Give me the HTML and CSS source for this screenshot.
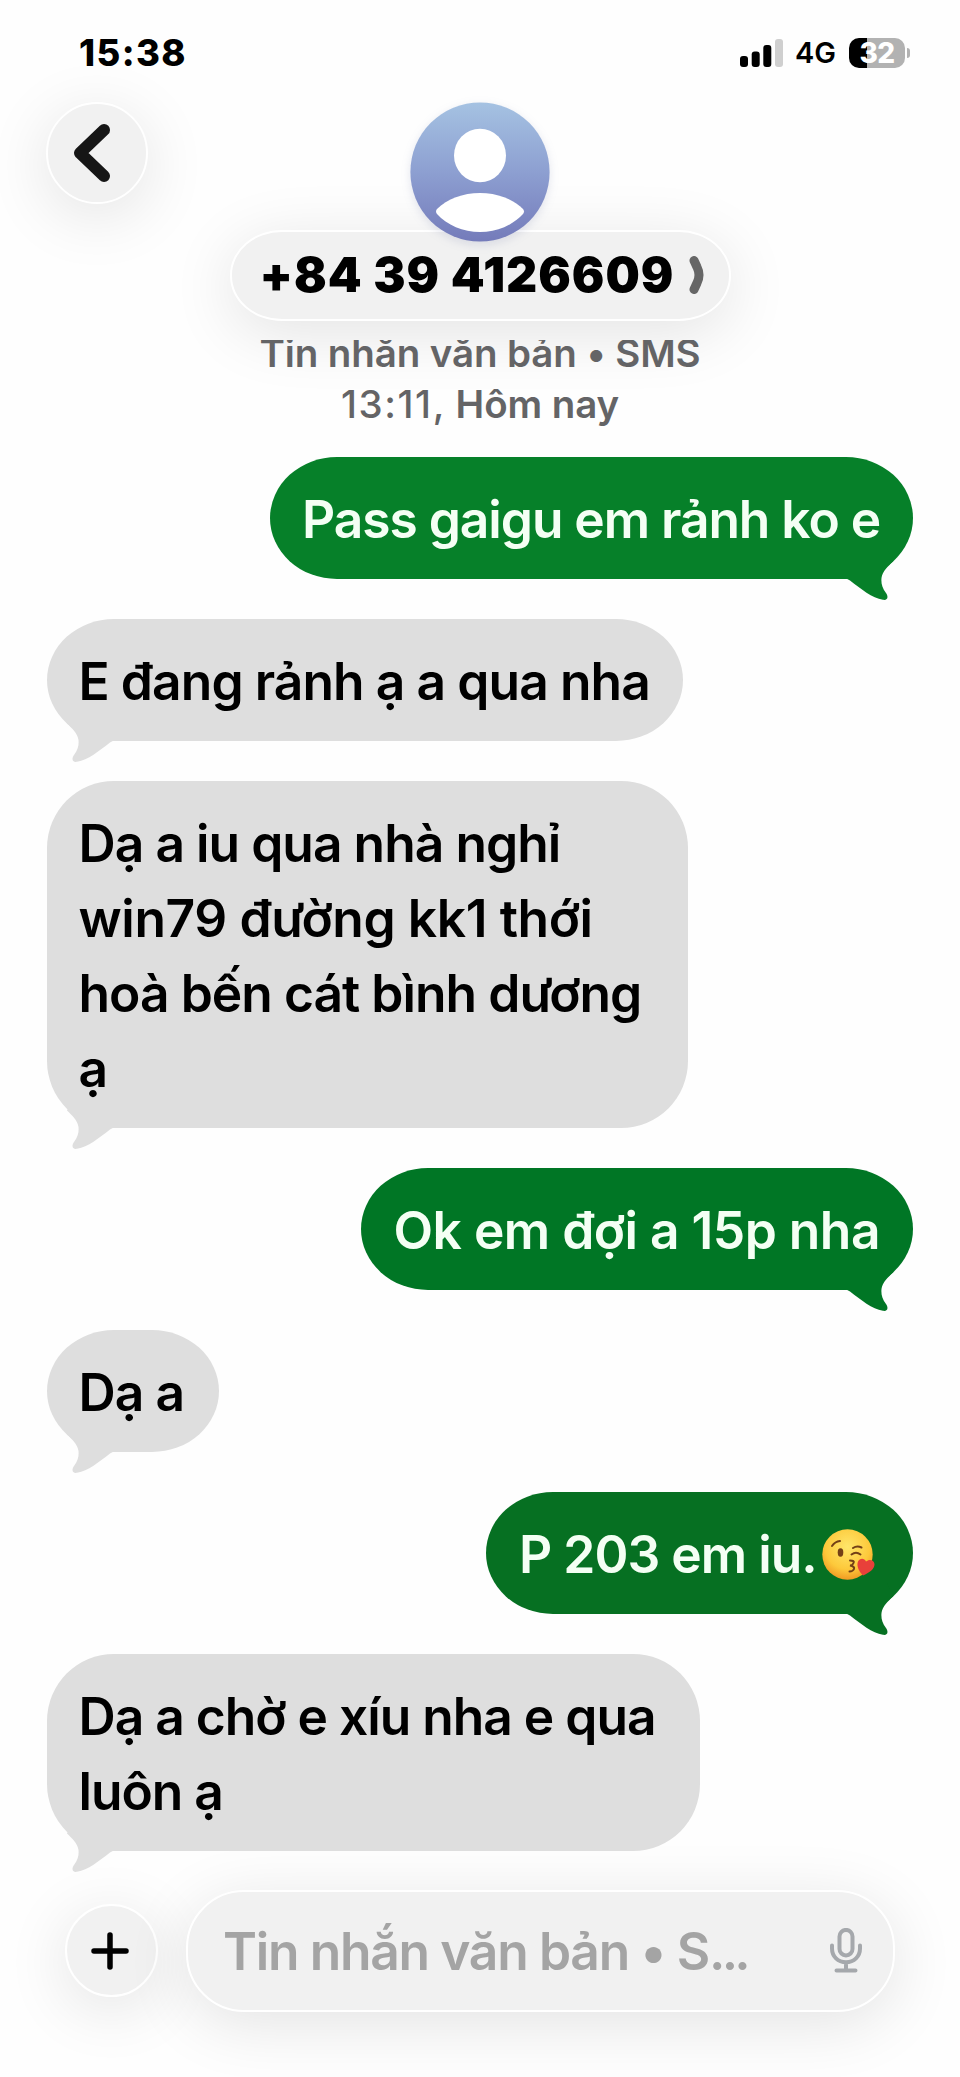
FILE: index.html
```html
<!DOCTYPE html>
<html lang="vi">
<head>
<meta charset="utf-8">
<title>+84 39 4126609</title>
<link rel="stylesheet" href="styles.css">
</head>
<body>
<svg class="defs" width="0" height="0">
  <symbol id="tail" viewBox="0 0 70 62"><path d="M0 40H12Q16 40 19 42.500C30 51 41 60 52 61.800C57 62.500 57.500 58.500 55 55C51 50 50 45 50.500 40C51.500 33 57 28.500 62 23.500L56 10H0Z"/></symbol>
</svg>
<header class="status">
  <time class="clock">15:38</time>
  <div class="indicators">
    <svg class="signal" viewBox="0 0 43 28"><rect x="0" y="17" width="8" height="11" rx="3"/><rect x="11.7" y="12.5" width="8" height="15.500" rx="3"/><rect x="23.300" y="6" width="8" height="22" rx="3"/><rect class="off" x="35" y="0" width="8" height="28" rx="3"/></svg>
    <span class="network">4G</span>
    <div class="battery"><span class="level">32</span></div>
    <i class="nub"></i>
  </div>
</header>
<section class="contact">
  <button class="glass back" aria-label="Quay lại"><svg viewBox="0 0 38 60"><path d="M31 7L7 30L31 53"/></svg></button>
  <div class="person">
    <svg class="avatar" viewBox="0 0 140 140">
      <defs><linearGradient id="sky" x2="0" y2="1"><stop stop-color="#a5c2e2"/><stop offset=".5" stop-color="#8d9fd1"/><stop offset="1" stop-color="#747bba"/></linearGradient></defs>
      <circle cx="70" cy="70" r="69.600" fill="url(#sky)"/>
      <ellipse cx="70" cy="53.500" rx="26" ry="26.700" fill="#fff"/>
      <path d="M27 107C37 97 53 91 70 91S103 97 113 107Q115 109.500 113 112C103 123 87 130 70 130S37 123 27 112Q25 109.500 27 107Z" fill="#fff"/>
    </svg>
    <div class="glass number"><span>+84 39 4126609</span><svg viewBox="0 0 16 38"><path d="M5 4.500L8 11Q12 19 8 27L5 33.500"/></svg></div>
  </div>
</section>
<div class="stamp">
  <div class="service"><span>Tin nhắn văn bản • SMS</span></div>
  <div class="when"><span class="hour">13:11,</span> Hôm nay</div>
</div>
<main class="thread">
  <div class="bubble out b1"><p>Pass gaigu em rảnh ko e</p><svg class="tail"><use href="#tail"/></svg></div>
  <div class="bubble in b2"><p>E đang rảnh ạ a qua nha</p><svg class="tail"><use href="#tail"/></svg></div>
  <div class="bubble in b3"><p>Dạ a iu qua nhà nghỉ<br><span class="loose">win79 đường kk1 thới</span><br>hoà bến cát bình dương<br>ạ</p><svg class="tail"><use href="#tail"/></svg></div>
  <div class="bubble out b4"><p>Ok em đợi a 15p nha</p><svg class="tail"><use href="#tail"/></svg></div>
  <div class="bubble in b5"><p>Dạ a</p><svg class="tail"><use href="#tail"/></svg></div>
  <div class="bubble out b6"><p>P 203 em iu.</p>
    <svg class="emoji" viewBox="0 0 54 51" role="img" aria-label="😘">
      <defs><radialGradient id="face" cx=".5" cy=".35" r=".68"><stop stop-color="#ffe66a"/><stop offset=".65" stop-color="#fdc93b"/><stop offset="1" stop-color="#ef9420"/></radialGradient></defs>
      <circle cx="25.500" cy="25.500" r="25.200" fill="url(#face)"/>
      <g fill="none" stroke="#734016" stroke-width="2" stroke-linecap="round"><path d="M10 17Q13 12.500 18 12"/><path d="M31 19Q35 16.500 39.500 18.500"/><path d="M29.500 25.500Q34 22 38.500 25.500"/><path d="M28 31.500Q33 31.500 31.500 34Q30.500 36.500 28 36.500Q33 37.500 32 40Q31 42.500 27.500 42.500"/></g>
      <ellipse cx="18.500" cy="23.500" rx="2.800" ry="4.200" fill="#734016"/>
      <path d="M41 46.500C36 41.500 34.500 36 36 32.500C38 28.500 42.500 29 44 32.500C47.500 29.500 52 31 52.500 35C52.800 40 47 44 41 46.500Z" fill="#e8403a"/>
    </svg>
    <svg class="tail"><use href="#tail"/></svg></div>
  <div class="bubble in b7"><p>Dạ a chờ e xíu nha e qua<br>luôn ạ</p><svg class="tail"><use href="#tail"/></svg></div>
</main>
<footer class="composer">
  <button class="glass plus" aria-label="Thêm"><svg viewBox="0 0 38 38"><path d="M19 3V35M3 19H35"/></svg></button>
  <div class="glass field"><span>Tin nhắn văn bản • S<span class="dots">...</span></span>
    <svg class="mic" viewBox="0 0 32 45"><rect x="9.500" y="1.900" width="13" height="25.500" rx="6.500"/><path d="M2 17.500V20.500C2 28.500 8 34.200 16 34.200S30 28.500 30 20.500V17.500M16 34.200V42M6.500 42.500H25.500"/></svg>
  </div>
</footer>
</body>
</html>
```
FILE: styles.css
```css
* { box-sizing: border-box; }
body {
  margin: 0;
  width: 960px;
  height: 2077px;
  overflow: hidden;
  background: #fefefe;
  font-family: Inter, "Noto Sans", sans-serif;
  color: #000;
}
p { margin: 0; }
button { padding: 0; font: inherit; }
.defs { display: block; }

.status {
  display: flex;
  justify-content: space-between;
  align-items: center;
  height: 102px;
  padding: 3px 50px 0 79px;
}
.clock { font-size: 36.5px; font-weight: 800; letter-spacing: 1.4px; }
.indicators { display: flex; align-items: center; }
.signal { width: 43px; height: 28px; margin-right: 12px; }
.signal .off { fill: #cfcfcf; }
.network { width: 54px; font-size: 29px; font-weight: 600; line-height: 30px; }
.battery {
  display: flex;
  justify-content: center;
  align-items: center;
  width: 56px;
  height: 30px;
  border-radius: 10px;
  background: linear-gradient(90deg, #000 18px, #b2b2b2 18px);
}
.level { color: #fff; font-size: 28px; font-weight: 800; letter-spacing: -.5px; line-height: 30px; }
.nub { width: 3px; height: 10px; margin-left: 2px; border-radius: 0 4px 4px 0; background: #b2b2b2; }

.glass {
  display: flex;
  align-items: center;
  border: 2px solid #fff;
  background: #f1f1f1;
  box-shadow: 0 12px 65px rgba(0, 0, 0, .11);
}
.contact { position: relative; height: 219px; padding: 0 46px; }
.back {
  justify-content: center;
  width: 102px;
  height: 102px;
  border-radius: 50%;
  padding-right: 10px;
}
.back svg { width: 38px; height: 60px; }
.back path { fill: none; stroke: #161616; stroke-width: 12; stroke-linecap: round; stroke-linejoin: round; }
.person {
  display: flex;
  flex-direction: column;
  align-items: center;
  margin-top: -102px;
}
.avatar { width: 140px; height: 140px; z-index: 1; margin-bottom: -12px; filter: drop-shadow(0 3px 5px rgba(70, 80, 140, .15)); }
.number {
  justify-content: space-between;
  width: 501px;
  height: 91px;
  padding: 0 24px 2px 28px;
  border-radius: 52px / 45px;
  font-size: 48.3px;
  font-weight: 900;
  letter-spacing: 1px;
  white-space: nowrap;
}
.number svg { width: 16px; height: 38px; }
.number path { fill: none; stroke: #666; stroke-width: 9; stroke-linecap: round; stroke-linejoin: round; }

.stamp {
  position: relative;
  height: 135.5px;
  padding-top: 19px;
  text-align: center;
  color: #646466;
  font-size: 38.5px;
  font-weight: 600;
  letter-spacing: -.1px;
  line-height: 50px;
  white-space: nowrap;
}
.service { display: flex; align-items: flex-end; justify-content: center; height: 38px; overflow: hidden; }
.when { margin-top: 1px; }
.hour { font-weight: 500; letter-spacing: 1.6px; }

.thread {
  display: flex;
  flex-direction: column;
  align-items: flex-start;
  gap: 40px;
  padding: 0 47px 0 46.5px;
  font-size: 51.5px;
  font-weight: 560;
  line-height: 75px;
  letter-spacing: -.95px;
  white-space: nowrap;
}
.bubble {
  position: relative;
  display: flex;
  padding: 25px 32px 22px;
  border-radius: 67px / 61px;
}
.bubble p, .emoji { position: relative; z-index: 1; }
.in { background: #dedede; fill: #dedede; }
.out { align-self: flex-end; color: #f4fff4; }
.tail { position: absolute; bottom: -21px; right: 12px; width: 70px; height: 62px; }
.in .tail { left: 12px; right: auto; transform: scaleX(-1); }
.loose { letter-spacing: -.4px; }
.b1 { width: 643px; letter-spacing: -1.05px; background: #068029; fill: #068029; }
.b2 { width: 636.5px; letter-spacing: -.9px; }
.b3 { width: 641px; border-radius: 67px; }
.b4 { width: 552.5px; padding-left: 33px; letter-spacing: -.5px; background: #007625; fill: #007625; }
.b5 { width: 172px; }
.b6 { width: 427px; padding-left: 33px; background: #067022; fill: #067022; }
.b7 { width: 653.5px; letter-spacing: -1px; border-radius: 67px; }
.emoji { width: 54px; height: 51px; margin: 12px 0 0 5px; flex: none; }

.composer {
  display: flex;
  align-items: center;
  justify-content: space-between;
  height: 122px;
  margin-top: 39px;
  padding: 0 65px;
}
.plus { justify-content: center; width: 93px; height: 93px; padding-right: 3px; border-radius: 50%; }
.plus svg { width: 38px; height: 38px; }
.plus path { stroke: #000; stroke-width: 5.5; stroke-linecap: round; }
.field {
  justify-content: space-between;
  width: 709px;
  height: 122px;
  padding: 0 31px 0 35px;
  border-radius: 58px;
  color: #a4a4a4;
  font-size: 51.5px;
  font-weight: 560;
  letter-spacing: -1.3px;
  white-space: nowrap;
}
.dots { letter-spacing: -3.8px; }
.mic { width: 32px; height: 45px; fill: none; stroke: #a5a8ac; stroke-width: 4; stroke-linecap: round; }
```
